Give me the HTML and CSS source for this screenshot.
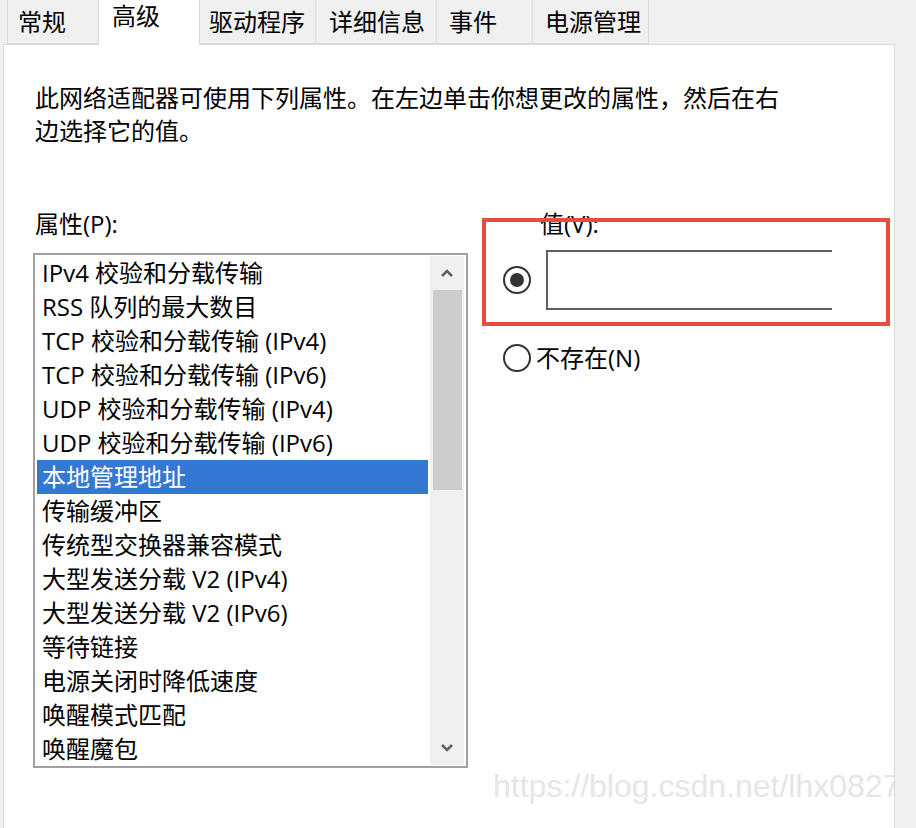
FILE: index.html
```html
<!DOCTYPE html>
<html lang="zh-CN">
<head>
  <meta charset="UTF-8">
  <title>高级</title>
  <link rel="stylesheet" href="styles.css">
</head>
<body>

  <!-- Pestañas -->
  <div class="tabs">
    <div class="tab">常规</div>
    <div class="tab activo">高级</div>
    <div class="tab">驱动程序</div>
    <div class="tab">详细信息</div>
    <div class="tab">事件</div>
    <div class="tab">电源管理</div>
  </div>

  <div class="panel">
    <p class="descripcion">此网络适配器可使用下列属性。在左边单击你想更改的属性，然后在右<br>边选择它的值。</p>

    <div class="contenido">
      <div class="col-izq">
        <div class="etiqueta">属性(P):</div>
        <div class="lista">
          <div class="items">
            <div class="item">IPv4 校验和分载传输</div>
            <div class="item">RSS 队列的最大数目</div>
            <div class="item">TCP 校验和分载传输 (IPv4)</div>
            <div class="item">TCP 校验和分载传输 (IPv6)</div>
            <div class="item">UDP 校验和分载传输 (IPv4)</div>
            <div class="item">UDP 校验和分载传输 (IPv6)</div>
            <div class="item seleccionado">本地管理地址</div>
            <div class="item">传输缓冲区</div>
            <div class="item">传统型交换器兼容模式</div>
            <div class="item">大型发送分载 V2 (IPv4)</div>
            <div class="item">大型发送分载 V2 (IPv6)</div>
            <div class="item">等待链接</div>
            <div class="item">电源关闭时降低速度</div>
            <div class="item">唤醒模式匹配</div>
            <div class="item">唤醒魔包</div>
          </div>
          <div class="scroll">
            <div class="flecha">
              <svg width="14" height="10" viewBox="0 0 14 10"><path d="M2 8 L7 3 L12 8" fill="none" stroke="#606060" stroke-width="2.6"/></svg>
            </div>
            <div class="pulgar"></div>
            <div class="relleno"></div>
            <div class="flecha">
              <svg width="14" height="10" viewBox="0 0 14 10"><path d="M2 2 L7 7 L12 2" fill="none" stroke="#606060" stroke-width="2.6"/></svg>
            </div>
          </div>
        </div>
      </div>

      <div class="col-der">
        <div class="etiqueta valor-label">值(V):</div>
        <div class="fila-valor">
          <span class="radio marcado"></span>
          <div class="entrada"></div>
        </div>
        <div class="fila-radio">
          <span class="radio"></span>
          <span>不存在(N)</span>
        </div>
      </div>
    </div>

    <!-- marca roja de la captura -->
    <div class="marco-rojo"></div>
    <div class="marca-agua">https://blog.csdn.net/lhx0827</div>
  </div>

</body>
</html>
```

FILE: styles.css
```css
* {
    box-sizing: border-box;
}

body {
    margin: 0;
    height: 828px;
    overflow: hidden;
    background-color: #f0f0f0;
    font-family: "Open Sans", "Noto Sans CJK SC", sans-serif;
    font-size: 24px;
    color: #000;
}

/* Pestañas */
.tabs {
    display: flex;
    padding-left: 7px;
    margin-top: -2px;
    height: 46px;
}

.tab {
    height: 46px;
    border: 1px solid #d9d9d9;
    border-left: none;
    background-color: #f0f0f0;
    line-height: 46px;
    padding-top: 0;
    white-space: nowrap;
}

.tab:first-child {
    border-left: 1px solid #d9d9d9;
    width: 92px;
    padding-left: 10px;
}

.tab:nth-child(2) { width: 101px; padding-left: 13px; }
.tab:nth-child(3) { width: 116px; padding-left: 9px; }
.tab:nth-child(4) { width: 121px; padding-left: 13px; }
.tab:nth-child(5) { width: 96px; padding-left: 12px; }
.tab:nth-child(6) { width: 116px; padding-left: 12px; }

.tab.activo {
    background-color: #fff;
    border-bottom: none;
    height: 47px;
    line-height: 34px;
    position: relative;
    z-index: 2;
}

/* Panel */
.panel {
    position: relative;
    margin-left: 3px;
    width: 892px;
    height: 800px;
    background-color: #fff;
    border: 1px solid #d9d9d9;
    overflow: hidden;
    padding: 36px 0 0 29px;
}

.descripcion {
    margin: 0 0 0 2px;
    line-height: 33px;
}

.contenido {
    display: flex;
    margin-top: 60px;
}

.etiqueta {
    line-height: 33px;
    margin-left: 2px;
}

.col-izq .etiqueta {
    margin-bottom: 13px;
}

/* Lista */
.lista {
    display: flex;
    width: 435px;
    height: 515px;
    border: 2px solid #a0a0a0;
    padding: 1px 2px 1px 2px;
}

.items {
    flex: 1;
}

.item {
    height: 34px;
    line-height: 34px;
    padding-left: 5px;
    white-space: nowrap;
}

.item.seleccionado {
    background-color: #3478d4;
    color: #fff;
}

.scroll {
    width: 34px;
    margin-left: 2px;
    background-color: #f0f0f0;
    display: flex;
    flex-direction: column;
    align-items: center;
}

.flecha {
    height: 34px;
    display: flex;
    align-items: center;
    justify-content: center;
}

.pulgar {
    width: 29px;
    height: 200px;
    background-color: #cdcdcd;
}

.relleno {
    flex: 1;
}

/* Columna derecha */
.col-der {
    margin-left: 35px;
}

.valor-label {
    margin: 0 0 0 37px;
}

.fila-valor {
    display: flex;
    align-items: center;
    margin-top: 10px;
}

.radio {
    width: 28px;
    height: 28px;
    border: 2px solid #333;
    border-radius: 50%;
    display: flex;
    align-items: center;
    justify-content: center;
    background-color: #fff;
}

.radio.marcado::after {
    content: "";
    width: 14px;
    height: 14px;
    border-radius: 50%;
    background-color: #333;
}

.entrada {
    width: 286px;
    height: 60px;
    margin-left: 15px;
    border: 2px solid #606060;
    border-right: none;
}

.fila-radio {
    display: flex;
    align-items: center;
    gap: 5px;
    margin-top: 31px;
    line-height: 33px;
}

.marco-rojo {
    position: absolute;
    left: 478px;
    top: 173px;
    width: 408px;
    height: 108px;
    border: 4px solid #e74c3c;
}

.marca-agua {
    position: absolute;
    left: 489px;
    top: 723px;
    font-family: "Liberation Sans", Arial, sans-serif;
    font-size: 32px;
    color: #e6e6e6;
    white-space: nowrap;
}
```
